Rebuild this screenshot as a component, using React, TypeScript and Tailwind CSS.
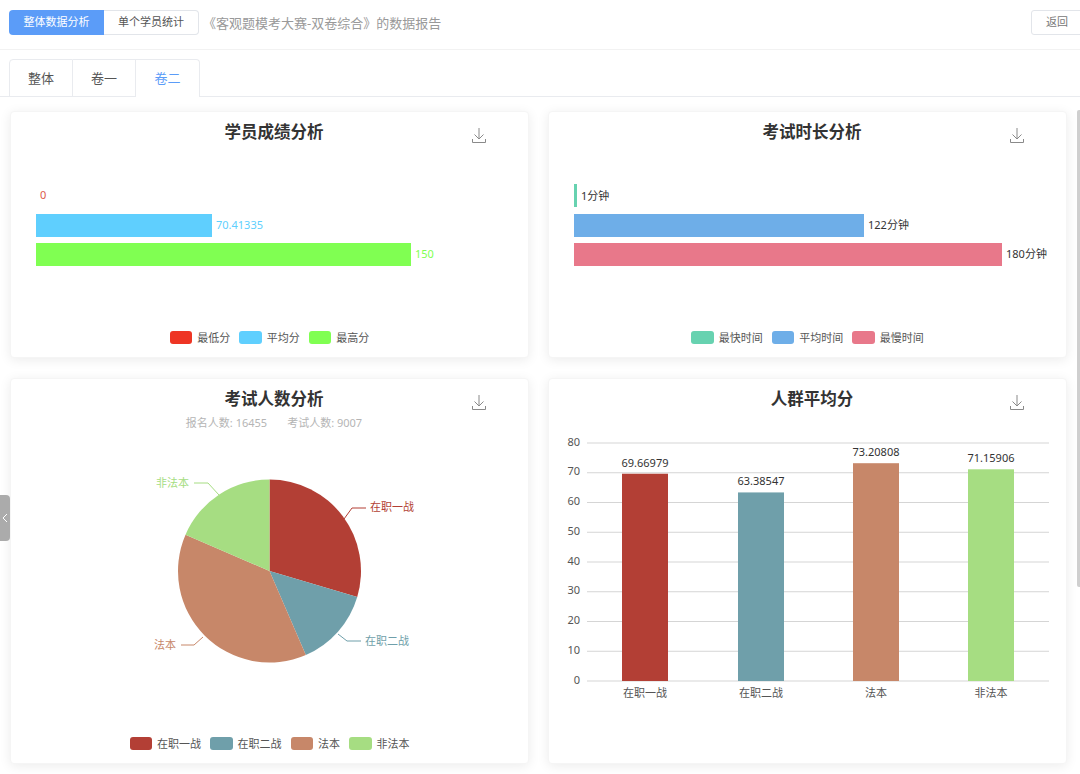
import React from 'react';

const RED = '#b33f35';
const TEAL = '#6f9faa';
const TAN = '#c78769';
const GREEN = '#a6dd82';

const DownloadIcon = () => (
  <svg width="16" height="17" viewBox="0 0 16 17" fill="none" stroke="#8a8a8a" strokeWidth="1">
    <path d="M8 1v10.5M3.5 7.5 8 12l4.5-4.5M1.5 12v3.5h13V12" />
  </svg>
);

const Legend = ({ items }: { items: { color: string; label: string }[] }) => (
  <div className="flex justify-center gap-[9px] h-[13px]">
    {items.map((item) => (
      <div key={item.label} className="flex items-center gap-[5px] text-[11px] leading-[13px] text-[#555]">
        <span className="w-[22.5px] h-[13px] rounded-[3px]" style={{ backgroundColor: item.color }} />
        <span>{item.label}</span>
      </div>
    ))}
  </div>
);

const Card = ({
  title,
  height,
  subtitle,
  children,
}: {
  title: string;
  height: string;
  subtitle?: React.ReactNode;
  children: React.ReactNode;
}) => (
  <div className={`relative bg-white border border-[#f5f5f5] rounded-[4px] shadow-[0_2px_12px_rgba(0,0,0,0.08)] ${height}`}>
    <div className="h-[38px] pl-[9px] text-center text-[16.5px] leading-[40px] font-bold text-[#333]">{title}</div>
    {subtitle}
    <div className="absolute top-[15px] left-[460px]">
      <DownloadIcon />
    </div>
    {children}
  </div>
);

const ScoreChart = () => (
  <svg className="block mt-[3px]" width="517" height="167" viewBox="11 153 517 167" fontSize="11">
    <text x="40" y="199" fill="#dd5a4a">0</text>
    <rect x="36" y="214" width="176" height="23" fill="#5fcffe" />
    <text x="216" y="229" fill="#5fcffe">70.41335</text>
    <rect x="36" y="243" width="375" height="23" fill="#80ff52" />
    <text x="415" y="258" fill="#80ff52">150</text>
  </svg>
);

const TimeChart = () => (
  <svg className="block mt-[3px]" width="517" height="167" viewBox="549 153 517 167" fontSize="11" fill="#333">
    <rect x="574" y="184" width="3" height="23" fill="#67d2b0" />
    <text x="581" y="200">1分钟</text>
    <rect x="574" y="214" width="290" height="23" fill="#6eaee8" />
    <text x="868" y="229">122分钟</text>
    <rect x="574" y="243" width="428" height="23" fill="#e8788a" />
    <text x="1006" y="258">180分钟</text>
  </svg>
);

// pie slices from the top going clockwise
const polar = (deg: number, r = 91.5) => {
  const a = ((deg - 90) * Math.PI) / 180;
  return `${269.5 + r * Math.cos(a)} ${571 + r * Math.sin(a)}`;
};
const slice = (from: number, to: number) =>
  `M269.5 571L${polar(from)}A91.5 91.5 0 ${to - from > 180 ? 1 : 0} 1 ${polar(to)}Z`;

const PieChart = () => (
  <svg className="block" width="517" height="300" viewBox="11 429 517 300" fontSize="11">
    <path d={slice(0, 106.5)} fill={RED} />
    <path d={slice(106.5, 156.6)} fill={TEAL} />
    <path d={slice(156.6, 293.4)} fill={TAN} />
    <path d={slice(293.4, 360)} fill={GREEN} />
    <g fill="none" strokeWidth="1">
      <path d="M344 519l8-11h14" stroke={RED} />
      <path d="M338 634l9 7h14" stroke={TEAL} />
      <path d="M203 637l-9 8h-13" stroke={TAN} />
      <path d="M219 495l-11-12h-14" stroke={GREEN} />
    </g>
    <text x="370" y="511" fill={RED}>在职一战</text>
    <text x="365" y="645" fill={TEAL}>在职二战</text>
    <text x="154" y="649" fill={TAN}>法本</text>
    <text x="156" y="487" fill={GREEN}>非法本</text>
  </svg>
);

const ticks = [80, 70, 60, 50, 40, 30, 20, 10, 0];
const bars = [
  { x: 622, w: 46, value: '69.66979', score: 69.66979, color: RED, label: '在职一战' },
  { x: 738, w: 46, value: '63.38547', score: 63.38547, color: TEAL, label: '在职二战' },
  { x: 853, w: 46, value: '73.20808', score: 73.20808, color: TAN, label: '法本' },
  { x: 968, w: 46, value: '71.15906', score: 71.15906, color: GREEN, label: '非法本' },
];

const BarChart = () => (
  <svg className="block" width="517" height="300" viewBox="549 429 517 300" fontSize="11">
    {ticks.map((t) => {
      const y = 681 - t * 2.975;
      return (
        <g key={t}>
          <line x1="587" x2="1049" y1={y} y2={y} stroke="#d5d5d5" />
          <text x="580" y={y + 2.5} textAnchor="end" fill="#555">{t}</text>
        </g>
      );
    })}
    {bars.map((b) => {
      const h = b.score * 2.975;
      return (
        <g key={b.label}>
          <rect x={b.x} y={681 - h} width={b.w} height={h} fill={b.color} />
          <text x={b.x + b.w / 2} y={681 - h - 7} textAnchor="middle" fill="#333">{b.value}</text>
          <text x={b.x + b.w / 2} y="697" textAnchor="middle" fill="#555">{b.label}</text>
        </g>
      );
    })}
  </svg>
);

const App: React.FC = () => {
  return (
    <div
      className="relative h-[774px] overflow-hidden bg-white"
      style={{ fontFamily: '"Noto Sans", "Noto Sans CJK SC", sans-serif' }}
    >
      <div className="h-[50px] px-[9px] pt-[10px] flex items-start border-b border-[#f2f2f2]">
        <div className="flex h-[25px] text-[11px]">
          <div className="w-[95px] flex items-center justify-center bg-[#5b9cf8] text-white rounded-l-[4px]">整体数据分析</div>
          <div className="w-[95px] flex items-center justify-center border border-l-0 border-[#e2e5ea] text-[#555] rounded-r-[4px]">单个学员统计</div>
        </div>
        <div className="ml-[4px] h-[25px] text-[13px] leading-[27px] text-[#999]">《客观题模考大赛-双卷综合》的数据报告</div>
        <div className="ml-auto mr-[-12px] w-[52px] h-[25px] flex items-center justify-center border border-[#e2e5ea] rounded-[3px] text-[11px] text-[#777]">返回</div>
      </div>

      <div className="h-[47px] pt-[9px] px-[9px] flex border-b border-[#e9ebef]">
        <div className="w-[64px] h-[38px] pt-[1px] flex items-center justify-center border border-[#e9ebef] rounded-tl-[4px] text-[13px] text-[#555]">整体</div>
        <div className="w-[63px] h-[38px] pt-[1px] flex items-center justify-center border border-l-0 border-[#e9ebef] text-[13px] text-[#555]">卷一</div>
        <div className="w-[64px] h-[38px] pt-[1px] flex items-center justify-center border border-l-0 border-b-0 border-[#e9ebef] bg-white rounded-tr-[4px] text-[13px] text-[#5b9cf8]">卷二</div>
      </div>

      <div className="pt-[14px] pl-[10px] grid grid-cols-[519px_519px] gap-x-[19px] gap-y-[20px]">
        <Card title="学员成绩分析" height="h-[247px]">
          <ScoreChart />
          <div className="mt-[11px]">
            <Legend
              items={[
                { color: '#ee3524', label: '最低分' },
                { color: '#5fcffe', label: '平均分' },
                { color: '#80ff52', label: '最高分' },
              ]}
            />
          </div>
        </Card>
        <Card title="考试时长分析" height="h-[247px]">
          <TimeChart />
          <div className="mt-[11px]">
            <Legend
              items={[
                { color: '#67d2b0', label: '最快时间' },
                { color: '#6eaee8', label: '平均时间' },
                { color: '#e8788a', label: '最慢时间' },
              ]}
            />
          </div>
        </Card>
        <Card
          title="考试人数分析"
          height="h-[386px]"
          subtitle={
            <div className="h-[12px] pl-[9px] flex justify-center gap-[20px] text-[11px] leading-[12px] text-[#b5b5b5]">
              <span>报名人数: 16455</span>
              <span>考试人数: 9007</span>
            </div>
          }
        >
          <PieChart />
          <div className="mt-[8px]">
            <Legend
              items={[
                { color: RED, label: '在职一战' },
                { color: TEAL, label: '在职二战' },
                { color: TAN, label: '法本' },
                { color: GREEN, label: '非法本' },
              ]}
            />
          </div>
        </Card>
        <Card title="人群平均分" height="h-[386px]" subtitle={<div className="h-[12px]" />}>
          <BarChart />
        </Card>
      </div>

      {/* collapse handle */}
      <div className="absolute left-0 top-[495px] w-[10px] h-[46px] bg-[#ababab] rounded-r-[4px] flex items-center justify-center">
        <svg width="6" height="10" viewBox="0 0 6 10" fill="none" stroke="#fff" strokeWidth="1">
          <path d="M5 1 1 5l4 4" />
        </svg>
      </div>

      {/* page scrollbar */}
      <div className="absolute right-0 top-[110px] w-[3px] h-[477px] bg-[#cfcfcf] rounded-l-[2px]" />
    </div>
  );
};

export default App;
